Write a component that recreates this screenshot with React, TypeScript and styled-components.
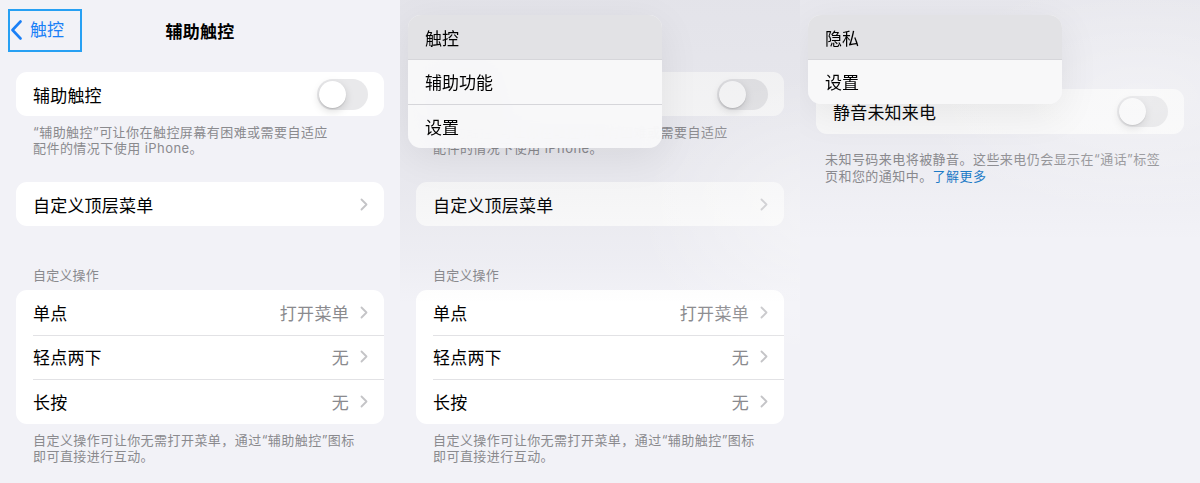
import React from "react";
import styled, { createGlobalStyle } from "styled-components";

const GlobalStyle = createGlobalStyle`
  html, body { margin: 0; padding: 0; background: #f2f2f7; }
  body {
    font-family: Inter, "Noto Sans CJK SC", "Noto Sans", sans-serif;
    -webkit-font-smoothing: antialiased;
  }
  * { box-sizing: border-box; }
`;

const Screen = styled.div`
  display: flex;
  width: 1200px;
  height: 483px;
  overflow: hidden;
`;

const Panel = styled.div<{ $top?: number }>`
  position: relative;
  width: 400px;
  height: 483px;
  flex: none;
  overflow: hidden;
  background: #f2f2f7;
  padding: ${(p) => p.$top ?? 0}px 16px 0 16px;
  display: flex;
  flex-direction: column;
`;

const NavBar = styled.div<{ $hidden?: boolean }>`
  height: 62px;
  display: grid;
  grid-template-columns: 1fr auto 1fr;
  align-items: center;
  margin: 0 -8px;
  visibility: ${(p) => (p.$hidden ? "hidden" : "visible")};
`;

const BackButton = styled.div`
  justify-self: start;
  display: flex;
  align-items: center;
  gap: 7px;
  width: 74px;
  height: 43px;
  margin-top: -2px;
  border: 2px solid #27a0f3;
  color: #1a7ff6;
  font-size: 17px;
  line-height: 1;
`;

const NavTitle = styled.div`
  font-size: 17px;
  font-weight: 600;
  color: #000;
  letter-spacing: 0.2px;
  margin-top: -2px;
`;

const Card = styled.div<{ $mt?: number }>`
  background: #ffffff;
  border-radius: 11px;
  overflow: hidden;
  margin-top: ${(p) => p.$mt ?? 0}px;
  flex: none;
`;

const Row = styled.div<{ $h?: number }>`
  position: relative;
  height: ${(p) => p.$h ?? 44.67}px;
  display: flex;
  align-items: center;
  padding: 0 16px 0 17px;
  font-size: 17px;
  color: #000;

  & + &::before {
    content: "";
    position: absolute;
    left: 17px;
    right: 0;
    top: 0;
    height: 1px;
    background: #e2e2e5;
  }
`;

const Label = styled.span`
  flex: 1;
  letter-spacing: 0.2px;
`;

const Value = styled.span`
  color: #8a8a8e;
  margin-right: 11px;
  letter-spacing: 0.3px;
`;

const Footer = styled.div<{ $mt?: number; $pl?: number; $lh?: number }>`
  margin-top: ${(p) => p.$mt ?? 8}px;
  padding-left: ${(p) => p.$pl ?? 17}px;
  font-size: 13px;
  line-height: ${(p) => p.$lh ?? 16}px;
  color: #8a8a8e;
  letter-spacing: 0.45px;
`;

const Link = styled.span`
  color: #1a7bc9;
`;

const SectionHeader = styled.div`
  margin-top: 41px;
  padding-left: 17px;
  font-size: 13px;
  line-height: 16px;
  color: #8a8a8e;
  letter-spacing: 0.2px;
`;

const Toggle = styled.div`
  width: 51px;
  height: 31px;
  border-radius: 16px;
  background: #e9e9eb;
  padding: 2px;
  display: flex;
  flex: none;
`;

const Knob = styled.div`
  width: 27px;
  height: 27px;
  border-radius: 50%;
  background: #ffffff;
  box-shadow: 0 3px 8px rgba(0, 0, 0, 0.15), 0 1px 1px rgba(0, 0, 0, 0.12);
`;

const Shade = styled.div<{ $variant: "a" | "b" }>`
  position: absolute;
  inset: 0;
  pointer-events: none;
  background: ${(p) =>
    p.$variant === "a"
      ? `radial-gradient(ellipse 260px 200px at 105% 45%, rgba(255,255,255,0.45), rgba(255,255,255,0) 70%),
         linear-gradient(180deg, rgba(110,110,125,0.11) 0%, rgba(110,110,125,0.07) 40%, rgba(110,110,125,0.03) 55%, rgba(110,110,125,0) 63%)`
      : `radial-gradient(ellipse 330px 170px at 85% 20%, rgba(255,255,255,0.35), rgba(255,255,255,0) 70%),
         linear-gradient(180deg, rgba(110,110,125,0.08) 0%, rgba(110,110,125,0.05) 30%, rgba(110,110,125,0.02) 42%, rgba(110,110,125,0) 50%)`};
`;

const Menu = styled.div`
  position: absolute;
  top: 15px;
  left: 8px;
  width: 254px;
  border-radius: 13px;
  overflow: hidden;
  background: rgba(248, 248, 249, 0.97);
  backdrop-filter: blur(24px);
  box-shadow: 0 10px 40px rgba(0, 0, 0, 0.07), 0 0 1px rgba(0, 0, 0, 0.04);
`;

const MenuItem = styled.div<{ $active?: boolean }>`
  height: 44.3px;
  display: flex;
  align-items: center;
  padding-left: 17px;
  font-size: 17px;
  color: #000;
  background: ${(p) => (p.$active ? "#e2e2e5" : "transparent")};
  & + & {
    border-top: 1px solid #d6d6da;
  }
`;

const BackChevron = () => (
  <svg width="13" height="20" viewBox="0 0 13 20">
    <path d="M10.5 1.5 L2.5 10 L10.5 18.5" fill="none" stroke="#1a7ff6" strokeWidth="2.6" strokeLinecap="round" strokeLinejoin="round" />
  </svg>
);

const Chevron = () => (
  <svg width="8" height="13" viewBox="0 0 8 13">
    <path d="M1.5 1.5 L6.5 6.5 L1.5 11.5" fill="none" stroke="#c4c4c7" strokeWidth="1.8" strokeLinecap="round" strokeLinejoin="round" />
  </svg>
);

const actions = [
  { label: "单点", value: "打开菜单" },
  { label: "轻点两下", value: "无" },
  { label: "长按", value: "无" },
];

const AssistivePage: React.FC<{ hideNav?: boolean }> = ({ hideNav }) => (
  <>
    <NavBar $hidden={hideNav}>
      <BackButton>
        <BackChevron />
        <span>触控</span>
      </BackButton>
      <NavTitle>辅助触控</NavTitle>
      <div />
    </NavBar>
    <Card $mt={10}>
      <Row $h={44}>
        <Label>辅助触控</Label>
        <Toggle>
          <Knob />
        </Toggle>
      </Row>
    </Card>
    <Footer>
      “辅助触控”可让你在触控屏幕有困难或需要自适应
      <br />
      配件的情况下使用 iPhone。
    </Footer>
    <Card $mt={26}>
      <Row $h={44}>
        <Label>自定义顶层菜单</Label>
        <Chevron />
      </Row>
    </Card>
    <SectionHeader>自定义操作</SectionHeader>
    <Card $mt={7}>
      {actions.map((a) => (
        <Row key={a.label}>
          <Label>{a.label}</Label>
          <Value>{a.value}</Value>
          <Chevron />
        </Row>
      ))}
    </Card>
    <Footer>
      自定义操作可让你无需打开菜单，通过“辅助触控”图标
      <br />
      即可直接进行互动。
    </Footer>
  </>
);

export default function App() {
  return (
    <>
      <GlobalStyle />
      <Screen>
        <Panel>
          <AssistivePage />
        </Panel>

        <Panel>
          <AssistivePage hideNav />
          <Shade $variant="a" />
          <Menu>
            <MenuItem $active>触控</MenuItem>
            <MenuItem>辅助功能</MenuItem>
            <MenuItem>设置</MenuItem>
          </Menu>
        </Panel>

        <Panel $top={89}>
          <Card>
            <Row $h={45}>
              <Label>静音未知来电</Label>
              <Toggle>
                <Knob />
              </Toggle>
            </Row>
          </Card>
          <Footer $mt={17} $pl={9} $lh={17}>
            未知号码来电将被静音。这些来电仍会显示在“通话”标签
            <br />
            页和您的通知中。<Link>了解更多</Link>
          </Footer>
          <Shade $variant="b" />
          <Menu>
            <MenuItem $active>隐私</MenuItem>
            <MenuItem>设置</MenuItem>
          </Menu>
        </Panel>
      </Screen>
    </>
  );
}
